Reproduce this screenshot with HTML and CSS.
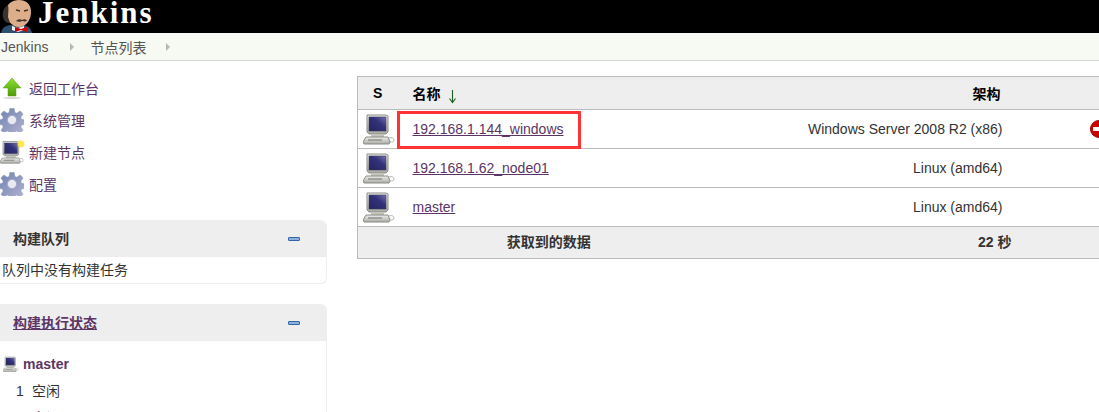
FILE: index.html
```html
<!DOCTYPE html>
<html lang="en">
<head>
    <meta charset="UTF-8">
    <meta name="viewport" content="width=device-width, initial-scale=1.0">
    <title>节点列表 [Jenkins]</title>
    <link rel="stylesheet" href="styles.css">
</head>
<body>
    <svg class="defs" width="0" height="0">
        <defs>
            <linearGradient id="screen" x1="0" y1="1" x2="1" y2="0">
                <stop offset="0" stop-color="#25245c"/>
                <stop offset="0.6" stop-color="#33327a"/>
                <stop offset="1" stop-color="#7674ad"/>
            </linearGradient>
            <linearGradient id="case" x1="0" y1="0" x2="0" y2="1">
                <stop offset="0" stop-color="#eeeeec"/>
                <stop offset="1" stop-color="#a9aba4"/>
            </linearGradient>
            <linearGradient id="gear" x1="0" y1="0" x2="1" y2="1">
                <stop offset="0" stop-color="#6f82ad"/>
                <stop offset="1" stop-color="#b4b4d4"/>
            </linearGradient>
            <linearGradient id="green" x1="0" y1="0" x2="0" y2="1">
                <stop offset="0" stop-color="#8ae234"/>
                <stop offset="1" stop-color="#4e9a06"/>
            </linearGradient>
            <symbol id="computer" viewBox="0 0 32 32">
                <path d="M4 2h19l2 1v16l-2 2H6l-2-2z" fill="url(#case)" stroke="#8a8c85"/>
                <rect x="6" y="4" width="17" height="14" fill="url(#screen)" stroke="#3a3a5c" stroke-width="0.6"/>
                <path d="M8 21h13v3H8z" fill="#c3c5bd"/>
                <path d="M3 24h22l2 5-1 2H1l-1-2z" fill="url(#case)" stroke="#8a8c85"/>
                <path d="M5 27h14" stroke="#72746e"/>
                <path d="M26 25c3-1 5 0 5 2s-2 2-4 2" fill="none" stroke="#b5b7b0"/>
            </symbol>
            <symbol id="gearicon" viewBox="0 0 24 24">
                <path fill="url(#gear)" stroke="#8d97b8" stroke-width="0.5" d="M9.800 0.500h4.400l0.700 3.900 1.900 0.800 3.300-2.300 3 3.100-2.300 3.300 0.800 1.900 3.900 0.700v4.400l-3.900 0.700-0.800 1.900 2.300 3.300-3 3-3.300-2.300-1.900 0.800-0.700 3.900H9.800l-0.700-3.900-1.900-0.800-3.300 2.300-3-3 2.300-3.300-0.800-1.900-3.900-0.700v-4.400l3.900-0.700 0.800-1.900-2.300-3.300 3-3.100 3.300 2.300 1.900-0.800z"/>
                <circle cx="12" cy="12" r="4.600" fill="#e9e9f2" stroke="#a5a7c8"/>
            </symbol>
        </defs>
    </svg>

    <header class="top">
        <svg class="butler" viewBox="0 0 33 33" width="33" height="33">
            <path d="M1 33c1-6 6-8 11-8h9c5 0 10 2 11 8z" fill="#2f4f6f"/>
            <path d="M12 26l6 2 6-2v4l-6 2-6-2z" fill="#f1f1f1"/>
            <path d="M6 12C6 4 12 0 19 0s12 4 12 12c0 8-5 15-12 15S6 20 6 12z" fill="#dcae8a"/>
            <path d="M3 17c-1-5 1-10 5-12 1 4 0 9 0 12l2 6c-4 0-6-2-7-6z" fill="#3a3330"/>
            <path d="M16 10l4 1M24 11l4-1" stroke="#40342e" stroke-width="1.300" fill="none"/>
            <path d="M16 21c2-2 4-2 6-1 2-1 4-1 5 1-3 1-4 0-5 0-1 1-4 1-6 0z" fill="#40342e"/>
            <path d="M15 27l6 2 6-2v5l-6-2-6 2z" fill="#cc0000"/>
        </svg>
        <span class="brand">Jenkins</span>
    </header>

    <nav class="crumbs">
        <a class="crumb" href="#">Jenkins</a>
        <i class="crumb-arrow"></i>
        <a class="crumb" href="#">节点列表</a>
        <i class="crumb-arrow"></i>
    </nav>

    <div class="page">
        <aside class="side">
            <ul class="tasks">
                <li>
                    <svg class="task-icon" viewBox="0 0 24 24">
                        <path d="M12 2l9 10h-5v8H8v-8H3z" fill="url(#green)" stroke="#5c9a1c" stroke-width="0.5"/>
                        <ellipse cx="12" cy="22" rx="9" ry="1.200" fill="#d8d8d8"/>
                    </svg>
                    <a href="#">返回工作台</a>
                </li>
                <li>
                    <svg class="task-icon"><use href="#gearicon"/></svg>
                    <a href="#">系统管理</a>
                </li>
                <li>
                    <span class="new-node">
                        <svg class="task-icon"><use href="#computer"/></svg>
                        <i class="spark"></i>
                    </span>
                    <a href="#">新建节点</a>
                </li>
                <li>
                    <svg class="task-icon"><use href="#gearicon"/></svg>
                    <a href="#">配置</a>
                </li>
            </ul>

            <section class="pane">
                <div class="pane-head">
                    <span>构建队列</span>
                    <i class="collapse"></i>
                </div>
                <div class="pane-body queue">队列中没有构建任务</div>
            </section>

            <section class="pane">
                <div class="pane-head">
                    <a href="#">构建执行状态</a>
                    <i class="collapse"></i>
                </div>
                <div class="pane-body executors">
                    <div class="exec-node">
                        <svg class="exec-icon"><use href="#computer"/></svg>
                        <a href="#">master</a>
                    </div>
                    <div class="exec-row"><span>1</span>空闲</div>
                    <div class="exec-row"><span>2</span>空闲</div>
                </div>
            </section>
        </aside>

        <main class="main">
            <table class="nodes">
                <colgroup>
                    <col class="col-s">
                    <col class="col-name">
                    <col class="col-arch">
                    <col>
                </colgroup>
                <thead>
                    <tr>
                        <th class="head-s">S</th>
                        <th class="left">名称 <svg class="sort" viewBox="0 0 9 15"><path d="M4.500 1v12M1.500 9.500l3 4 3-4" fill="none" stroke="#1b5e20" stroke-width="1.100"/></svg></th>
                        <th class="right">架构</th>
                        <th></th>
                    </tr>
                </thead>
                <tbody>
                    <tr>
                        <td class="center"><svg class="node-icon"><use href="#computer"/></svg></td>
                        <td class="marked"><a href="#">192.168.1.144_windows</a><i class="red-box"></i></td>
                        <td class="right">Windows Server 2008 R2 (x86)</td>
                        <td class="status">
                            <svg class="stop" viewBox="0 0 18 18">
                                <circle cx="9" cy="9" r="8.500" fill="#cc0000" stroke="#a40000"/>
                                <rect x="3" y="7" width="12" height="4" fill="#fff"/>
                            </svg>
                        </td>
                    </tr>
                    <tr>
                        <td class="center"><svg class="node-icon"><use href="#computer"/></svg></td>
                        <td><a href="#">192.168.1.62_node01</a></td>
                        <td class="right">Linux (amd64)</td>
                        <td></td>
                    </tr>
                    <tr>
                        <td class="center"><svg class="node-icon"><use href="#computer"/></svg></td>
                        <td><a href="#">master</a></td>
                        <td class="right">Linux (amd64)</td>
                        <td></td>
                    </tr>
                </tbody>
                <tfoot>
                    <tr>
                        <th colspan="2">获取到的数据</th>
                        <th class="right total">22 秒</th>
                        <th></th>
                    </tr>
                </tfoot>
            </table>
        </main>
    </div>
</body>
</html>
```

FILE: styles.css
```css
*{
    box-sizing: border-box;
}
html,body{
    height: 412px;
    overflow: hidden;
}
body{
    margin: 0;
    background: #fff;
    color: #333;
    font-family: "Liberation Sans", "Noto Sans CJK SC", sans-serif;
    font-size: 14px;
}
a{
    color: #5c3566;
}
.defs{
    position: absolute;
}

/* header */
.top{
    display: flex;
    height: 33px;
    background: #000;
    overflow: hidden;
}
.butler{
    flex: none;
}
.brand{
    margin-left: 5px;
    color: #fff;
    font-family: "Liberation Serif", serif;
    font-size: 31px;
    font-weight: bold;
    line-height: 25px;
    letter-spacing: 2px;
}

.crumbs{
    display: flex;
    align-items: center;
    height: 28px;
    padding-left: 1px;
    background: #f6faf2;
    border-bottom: 1px solid #d3d7cf;
}
.crumb{
    color: #555;
    text-decoration: none;
}
.crumb-arrow{
    width: 0;
    height: 0;
    margin: 0 16px 0 22px;
    border-left: 4px solid #b4b8b0;
    border-top: 4px solid transparent;
    border-bottom: 4px solid transparent;
}
.crumb-arrow:last-child{
    margin-left: 20px;
}

/* sidebar */
.page{
    display: flex;
}
.side{
    flex: none;
    width: 327px;
    padding-top: 11px;
}
.tasks{
    margin: 0 0 20px;
    padding: 0;
    list-style: none;
}
.tasks li{
    display: flex;
    align-items: center;
    gap: 5px;
    height: 32px;
}
.tasks a{
    text-decoration: none;
}
.task-icon{
    display: block;
    width: 24px;
    height: 24px;
}
.new-node{
    position: relative;
}
.spark{
    position: absolute;
    top: 1px;
    right: 0;
    width: 6px;
    height: 6px;
    border-radius: 50%;
    background: #fce94f;
    box-shadow: 0 0 2px #edd400;
}

.pane{
    margin-bottom: 20px;
    border-right: 1px solid #eee;
    border-bottom: 1px solid #eee;
    border-radius: 0 6px 6px 0;
}
.pane-head{
    display: flex;
    align-items: center;
    justify-content: space-between;
    height: 37px;
    padding: 0 26px 0 13px;
    background: #eee;
    border-radius: 0 6px 0 0;
    font-weight: bold;
}
.pane-head span,
.pane-head a{
    margin-bottom: 2px;
}
.pane-head a{
    color: #5c3566;
}
.collapse{
    width: 12px;
    height: 4px;
    background: #8fb0dc;
    border: 1px solid #3465a4;
    border-radius: 1px;
}
.queue{
    height: 26px;
    padding-left: 2px;
    line-height: 26px;
}
.executors{
    padding: 12px 0 0 3px;
}
.exec-node{
    display: flex;
    align-items: center;
    gap: 4px;
    height: 22px;
    font-weight: bold;
}
.exec-node a{
    text-decoration: none;
}
.exec-icon{
    width: 16px;
    height: 16px;
}
.exec-row{
    height: 27px;
    padding-left: 13px;
    line-height: 27px;
}
.exec-row span{
    display: inline-block;
    width: 16px;
}
.exec-node + .exec-row{
    margin-top: 3px;
}

/* node table */
.main{
    flex: none;
    margin-left: 30px;
    padding-top: 15px;
}
.nodes{
    width: 900px;
    table-layout: fixed;
    border-collapse: collapse;
    border: 1px solid #bbb;
}
.col-s{
    width: 45px;
}
.col-name{
    width: 337px;
}
.col-arch{
    width: 272px;
}
.nodes th{
    height: 33px;
    background: #eee;
    color: #333;
    font-weight: bold;
}
.nodes thead th{
    color: #000;
}
.nodes .head-s{
    padding-right: 6px;
}
.nodes td{
    height: 39px;
    padding: 0 9px 0 10px;
    border-top: 1px solid #bbb;
    border-bottom: 1px solid #bbb;
}
.nodes .left{
    padding-left: 10px;
    text-align: left;
}
.nodes .right{
    padding-right: 9px;
    text-align: right;
}
.nodes thead .right{
    padding-right: 11px;
}
.nodes tfoot th{
    height: 32px;
    padding-bottom: 4px;
    border-top: 1px solid #bbb;
}
.nodes .total{
    padding-right: 0;
}
.nodes .center{
    padding: 0;
    text-align: center;
}
.sort{
    width: 9px;
    height: 15px;
    margin-left: 4px;
    vertical-align: -5px;
}
.node-icon{
    display: block;
    width: 32px;
    height: 32px;
    margin: 0 auto 0 5px;
}
.marked{
    position: relative;
}
.red-box{
    position: absolute;
    top: 1px;
    left: -6px;
    width: 184px;
    height: 38px;
    border: 3px solid #f33;
}
.nodes .status{
    padding-left: 78px;
}
.stop{
    display: block;
    width: 18px;
    height: 18px;
}
```
